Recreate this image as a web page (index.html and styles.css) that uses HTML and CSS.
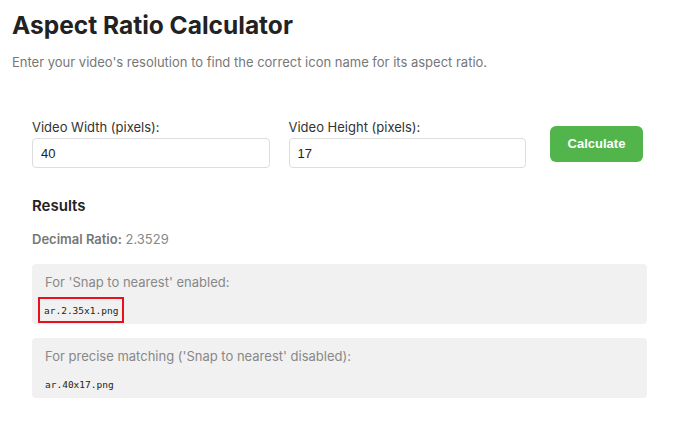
FILE: index.html
```html
<!DOCTYPE html>
<html lang="en">

<head>
    <meta charset="UTF-8">
    <meta name="viewport" content="width=device-width, initial-scale=1.0">
    <title>Aspect Ratio Calculator</title>
    <link rel="stylesheet" href="styles.css">
</head>

<body>
    <h1>Aspect Ratio Calculator</h1>
    <p class="intro">Enter your video's resolution to find the correct icon name for its aspect ratio.</p>

    <div class="calculator">
        <div class="input-row">
            <div class="field">
                <label for="width">Video Width (pixels):</label>
                <input type="number" id="width" value="40">
            </div>
            <div class="field">
                <label for="height">Video Height (pixels):</label>
                <input type="number" id="height" value="17">
            </div>
            <button class="calc-btn">Calculate</button>
        </div>

        <div class="results">
            <h3>Results</h3>
            <p class="ratio"><strong>Decimal Ratio:</strong> 2.3529</p>

            <div class="result-box">
                <p>For 'Snap to nearest' enabled:</p>
                <code class="highlight">ar.2.35x1.png</code>
            </div>

            <div class="result-box">
                <p>For precise matching ('Snap to nearest' disabled):</p>
                <code>ar.40x17.png</code>
            </div>
        </div>
    </div>
</body>

</html>
```

FILE: styles.css
```css
body {
    font-family: Inter, "Liberation Sans", sans-serif;
    color: #222;
    margin: 0;
    padding: 0 12px;
}

h1 {
    font-size: 24.5px;
    font-weight: 700;
    margin: 10px 0 0;
    color: #222;
}

.intro {
    font-size: 13px;
    color: #777;
    margin: 14px 0 0;
}

.calculator {
    padding: 0 23px 0 20px;
    margin-top: 49px;
}

.input-row {
    display: flex;
    align-items: center;
    gap: 19px;
    padding-right: 4px;
}

.field {
    flex: 1;
}

label {
    display: block;
    font-size: 13px;
    color: #333;
    margin-bottom: 3px;
}

input {
    width: 100%;
    box-sizing: border-box;
    height: 30px;
    padding: 6px 8px;
    border: 1px solid #ddd;
    border-radius: 4px;
    font-size: 13px;
    color: #222;
}

input::-webkit-inner-spin-button {
    display: none;
}

.calc-btn {
    background: #52b54b;
    color: white;
    border: none;
    border-radius: 6px;
    width: 93px;
    height: 36px;
    margin-left: 5px;
    font-size: 13px;
    font-weight: bold;
    cursor: pointer;
}

.results {
    margin-top: 28px;
}

.results h3 {
    font-size: 15px;
    font-weight: 600;
    margin: 0;
}

.ratio {
    font-size: 13px;
    color: #888;
    margin: 16px 0 0;
}

.ratio strong {
    color: #777;
    font-weight: 600;
}

.result-box {
    background: #f1f1f1;
    border-radius: 4px;
    padding: 10px 13px 8px;
    margin-top: 17px;
    height: 60px;
    box-sizing: border-box;
}

.result-box + .result-box {
    margin-top: 14px;
}

.result-box p {
    font-size: 13px;
    color: #888;
    margin: 0 0 8px;
}

.result-box code {
    font-family: "DejaVu Sans Mono", monospace;
    font-size: 9.5px;
    color: #222;
    display: inline-block;
    padding: 2px 0 6px;
}

.result-box code.highlight {
    border: 2px solid #e8101c;
    padding: 6px 4px 5px;
    margin-left: -7px;
    margin-top: -6px;
}
```
